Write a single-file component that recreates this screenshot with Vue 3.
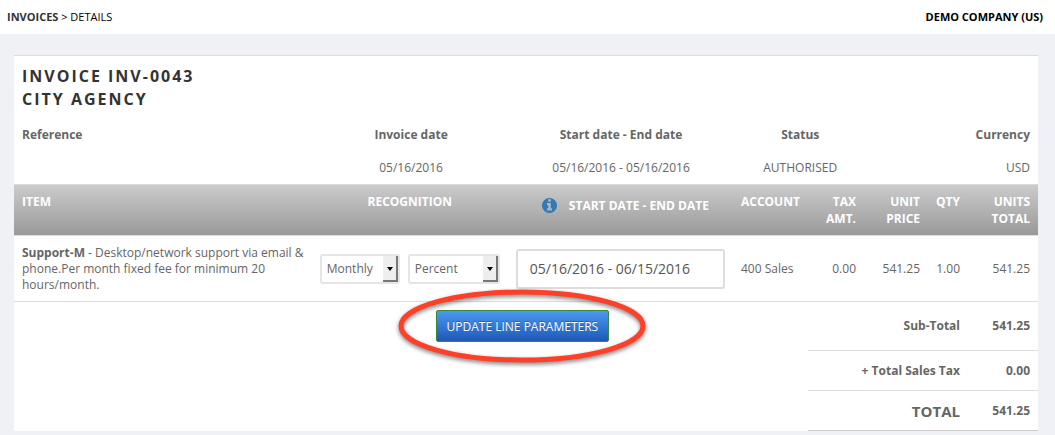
<template>
  <div class="page">
    <header class="topbar">
      <nav class="breadcrumb" aria-label="Breadcrumb">
        <a href="#">INVOICES</a> &gt; DETAILS
      </nav>
      <strong class="company">{{ company }}</strong>
    </header>

    <main class="card">
      <h1 class="title">
        INVOICE {{ invoice.number }}<br>
        {{ invoice.customer }}
      </h1>

      <table class="summary">
        <thead>
          <tr>
            <th class="col-reference">Reference</th>
            <th class="col-date">Invoice date</th>
            <th class="col-period">Start date - End date</th>
            <th class="col-status">Status</th>
            <th class="col-currency">Currency</th>
          </tr>
        </thead>
        <tbody>
          <tr>
            <td class="col-reference">{{ invoice.reference }}</td>
            <td>{{ invoice.date }}</td>
            <td>{{ invoice.period }}</td>
            <td>{{ invoice.status }}</td>
            <td class="col-currency">{{ invoice.currency }}</td>
          </tr>
        </tbody>
      </table>

      <table class="lines">
        <colgroup>
          <col class="w-item">
          <col class="w-recognition">
          <col class="w-period">
          <col class="w-account">
          <col class="w-tax">
          <col class="w-price">
          <col class="w-qty">
          <col class="w-total">
        </colgroup>
        <thead>
          <tr>
            <th>ITEM</th>
            <th class="center">RECOGNITION</th>
            <th class="period-head">
              <div class="period-label">
                <svg class="info" viewBox="0 128 1536 1536" aria-hidden="true">
                  <path d="M1024 1376v-160q0-14-9-23t-23-9h-96v-512q0-14-9-23t-23-9h-320q-14 0-23 9t-9 23v160q0 14 9 23t23 9h96v320h-96q-14 0-23 9t-9 23v160q0 14 9 23t23 9h448q14 0 23-9t9-23zm-128-896v-192q0-14-9-23t-23-9h-192q-14 0-23 9t-9 23v192q0 14 9 23t23 9h192q14 0 23-9t9-23zm640 416q0 209-103 385.5t-279.5 279.5-385.5 103-385.5-103-279.5-279.5-103-385.5 103-385.5 279.5-279.5 385.5-103 385.5 103 279.5 279.5 103 385.5z" />
                </svg>
                <span>START DATE - END DATE</span>
              </div>
            </th>
            <th>ACCOUNT</th>
            <th class="right">TAX<br>AMT.</th>
            <th class="right">UNIT<br>PRICE</th>
            <th class="right">QTY</th>
            <th class="right">UNITS<br>TOTAL</th>
          </tr>
        </thead>
        <tbody>
          <tr v-for="line in lines" :key="line.code">
            <td class="item"><strong>{{ line.code }}</strong> - {{ line.description }}</td>
            <td>
              <div class="selects">
                <div class="select-box select-interval">
                  <select v-model="line.interval" aria-label="Recognition interval">
                    <option>Monthly</option>
                    <option>Daily</option>
                  </select>
                  <span class="select-arrow"></span>
                </div>
                <div class="select-box select-method">
                  <select v-model="line.method" aria-label="Recognition method">
                    <option>Percent</option>
                    <option>Amount</option>
                  </select>
                  <span class="select-arrow"></span>
                </div>
              </div>
            </td>
            <td><input v-model="line.period" class="period-input" type="text" aria-label="Start date - End date"></td>
            <td>{{ line.account }}</td>
            <td class="right">{{ money(line.tax) }}</td>
            <td class="right">{{ money(line.price) }}</td>
            <td class="right">{{ money(line.qty) }}</td>
            <td class="right">{{ money(line.price * line.qty) }}</td>
          </tr>
        </tbody>
        <tfoot>
          <tr class="subtotal">
            <td class="blank" rowspan="3"></td>
            <td class="blank action" rowspan="3" colspan="2">
              <div class="highlight">
                <button type="button" class="update">UPDATE LINE PARAMETERS</button>
                <svg class="ring" viewBox="0 0 256 84" aria-hidden="true">
                  <ellipse cx="128" cy="42" rx="121" ry="34" />
                </svg>
              </div>
            </td>
            <td class="blank" rowspan="3"></td>
            <th class="right" colspan="3">Sub-Total</th>
            <td class="right">{{ money(subTotal) }}</td>
          </tr>
          <tr>
            <th class="right" colspan="3">+ Total Sales Tax</th>
            <td class="right">{{ money(totalTax) }}</td>
          </tr>
          <tr class="grand">
            <th class="right" colspan="3">TOTAL</th>
            <td class="right">{{ money(subTotal + totalTax) }}</td>
          </tr>
        </tfoot>
      </table>
    </main>
  </div>
</template>

<script setup>
import { ref, computed } from 'vue'

const company = 'DEMO COMPANY (US)'

const invoice = {
  number: 'INV-0043',
  customer: 'CITY AGENCY',
  reference: '',
  date: '05/16/2016',
  period: '05/16/2016 - 05/16/2016',
  status: 'AUTHORISED',
  currency: 'USD'
}

const lines = ref([
  {
    code: 'Support-M',
    description: 'Desktop/network support via email & phone.Per month fixed fee for minimum 20 hours/month.',
    interval: 'Monthly',
    method: 'Percent',
    period: '05/16/2016 - 06/15/2016',
    account: '400 Sales',
    tax: 0,
    price: 541.25,
    qty: 1
  }
])

const money = (value) => value.toFixed(2)

const subTotal = computed(() => lines.value.reduce((sum, l) => sum + l.price * l.qty, 0))
const totalTax = computed(() => lines.value.reduce((sum, l) => sum + l.tax, 0))
</script>

<style>
body {
  background-color: #f0f1f7;
}
</style>

<style scoped>
.page {
  font-family: "Open Sans", sans-serif;
  font-size: 12px;
  line-height: 16px;
  color: #666;
}

.topbar {
  display: flex;
  justify-content: space-between;
  padding: 9px 12px 9px 7px;
  background-color: #fff;
  color: #000;
  font-size: 11px;
}

.breadcrumb a {
  color: #333;
  font-weight: bold;
  text-decoration: none;
}

.card {
  margin: 21px 17px 4px 14px;
  border-top: 1px solid #ddd;
  background-color: #fff;
}

.title {
  margin: 0;
  padding: 9px 8px 7px;
  color: #333;
  font-size: 16px;
  font-weight: bold;
  line-height: 23px;
  letter-spacing: 2px;
}

table {
  width: 100%;
  table-layout: fixed;
  border-collapse: separate;
  border-spacing: 0;
}

th,
td {
  box-sizing: border-box;
  padding: 8px;
  text-align: left;
}

/* Invoice summary */
.summary th,
.summary td {
  height: 33px;
  text-align: center;
}

.summary .col-reference {
  text-align: left;
}

.summary .col-currency {
  width: 161px;
  text-align: right;
}

.col-date {
  width: 21%;
}

.col-period {
  width: 20%;
}

.col-status {
  width: 15%;
}

/* Invoice lines */
.w-recognition {
  width: 196px;
}

.w-period {
  width: 22%;
}

.w-account {
  width: 75px;
}

.w-tax {
  width: 56px;
}

.w-price {
  width: 64px;
}

.w-qty {
  width: 40px;
}

.w-total {
  width: 70px;
}

.lines thead tr {
  background: linear-gradient(#ccc, #999);
}

.lines thead th {
  border-top: 1px solid #ddd;
  color: #fff;
  line-height: 17px;
  vertical-align: top;
}

.lines tbody td {
  height: 67px;
  border-top: 1px solid #ddd;
  border-bottom: 1px solid #ddd;
}

.lines .item {
  padding-right: 0;
}

.lines .center {
  text-align: center;
}

.lines .right {
  text-align: right;
}

.lines .period-head {
  padding: 12px 8px 8px 18px;
}

.period-label {
  display: flex;
  align-items: center;
  justify-content: center;
  gap: 12px;
  white-space: nowrap;
}

.info {
  width: 15px;
  height: 15px;
  fill: #337ab7;
}

.selects {
  display: flex;
  gap: 8px;
}

.select-box {
  position: relative;
}

.select-interval {
  width: 80px;
}

.select-method {
  width: 92px;
}

.select-box select {
  box-sizing: border-box;
  width: 100%;
  height: 30px;
  padding: 0 18px 0 5px;
  border: 2px solid #e5e5e5;
  border-radius: 3px;
  background-color: #fff;
  color: #666;
  font: inherit;
  appearance: none;
}

.select-arrow {
  position: absolute;
  top: 2px;
  right: 2px;
  bottom: 2px;
  box-sizing: border-box;
  width: 15px;
  border-right: 2px solid #777;
  border-bottom: 2px solid #777;
  background-color: #eee;
  pointer-events: none;
}

.select-arrow::after {
  content: "";
  position: absolute;
  top: 11px;
  left: 4px;
  border: 3px solid transparent;
  border-top: 4px solid #000;
  border-bottom: 0;
}

.period-input {
  box-sizing: border-box;
  width: 100%;
  height: 40px;
  padding: 0 12px;
  border: 2px solid #ddd;
  border-radius: 3px;
  background-color: #fff;
  color: #555;
  font-family: inherit;
  font-size: 14px;
}

/* Totals */
.lines tfoot th,
.lines tfoot td {
  height: 40px;
  border-bottom: 1px solid #ddd;
  font-weight: bold;
}

.lines tfoot .blank {
  border-bottom: 0;
}

.lines tfoot .subtotal th,
.lines tfoot .subtotal td {
  height: 49px;
}

.lines tfoot .grand th,
.lines tfoot .grand td {
  border-bottom-color: #ccc;
}

.lines tfoot .grand th {
  font-size: 15px;
}

.lines tfoot .action {
  text-align: center;
  vertical-align: top;
}

.highlight {
  display: inline-block;
  position: relative;
}

.update {
  height: 32px;
  padding: 0 10px;
  border: 1px solid #3c863d;
  border-radius: 2px;
  background: linear-gradient(#4a9af0, #1f58b8);
  color: #fff;
  font-family: inherit;
  font-size: 12px;
  text-shadow: 0 -1px 0 rgba(0, 0, 0, 0.3);
  white-space: nowrap;
}

.ring {
  position: absolute;
  top: 50%;
  left: 50%;
  width: 256px;
  height: 84px;
  transform: translate(-50%, -50%);
  pointer-events: none;
}

.ring ellipse {
  fill: none;
  stroke: #ff3f27;
  stroke-width: 5;
  filter: drop-shadow(0 2px 2px rgba(0, 0, 0, 0.5));
}
</style>
